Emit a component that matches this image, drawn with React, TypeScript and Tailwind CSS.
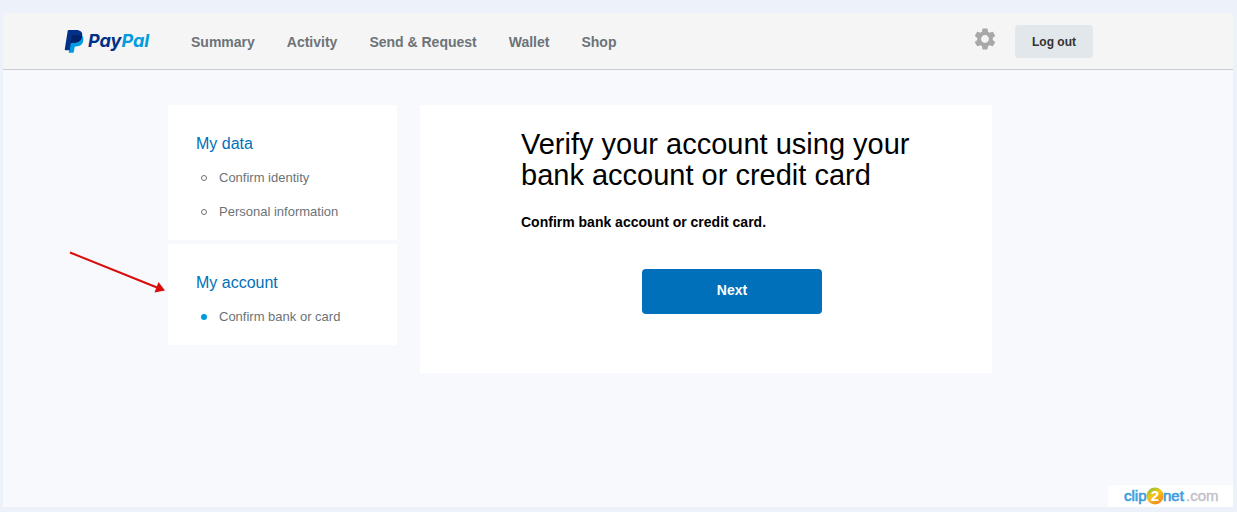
import { MdSettings } from "react-icons/md";

const navItems = ["Summary", "Activity", "Send & Request", "Wallet", "Shop"];

const sections = [
  {
    title: "My data",
    items: [
      { label: "Confirm identity", active: false },
      { label: "Personal information", active: false },
    ],
  },
  {
    title: "My account",
    items: [{ label: "Confirm bank or card", active: true }],
  },
];

const Logo = () => (
  <a href="#" aria-label="PayPal" className="flex items-center">
    <svg width="88" height="36" viewBox="0 -5 88 36" className="overflow-visible">
      <g transform="translate(-1 2) scale(0.95)">
        <path
          fill="#009cde"
          d="M21.222 6.917a3.35 3.35 0 0 0-.607-.541L9 5 6.3 21.8l-.24 1.55a.56.56 0 0 0 .554.65h3.882c.46 0 .85-.334.922-.788.06-.26.76-4.852.816-5.09a.932.932 0 0 1 .923-.788h.58c3.76 0 6.705-1.528 7.565-5.946.36-1.847.174-3.388-.777-4.471z"
        />
        <path
          fill="#003087"
          d="M7.076 21.337H2.47a.641.641 0 0 1-.633-.74L4.944.901C5.026.382 5.474 0 5.998 0h7.46c2.57 0 4.578.543 5.69 1.81 1.01 1.15 1.304 2.42 1.012 4.287-.023.143-.047.288-.077.437-.983 5.05-4.349 6.797-8.647 6.797h-2.19c-.524 0-.968.382-1.05.9z"
        />
        <path
          fill="#012169"
          d="M9.2 6.5c.1-.6.5-.9 1-.9h6.2c1.600 0 2.900.2 3.800.6-.023.143-.087.188-.117.337-.983 5.050-4.349 6.797-8.647 6.797h-2.190c-.4 0-.8.200-1 .6z"
        />
      </g>
      <text
        x="24"
        y="19"
        fontSize="18"
        className="font-['Inter',sans-serif] font-bold italic"
      >
        <tspan fill="#003087">Pay</tspan>
        <tspan fill="#009cde">Pal</tspan>
      </text>
    </svg>
  </a>
);

const Header = () => (
  <header className="flex items-center justify-between border-b border-[#c9cdd0] bg-[#f5f5f5] pl-[61px] pr-[140px] h-[57px]">
    <div className="flex items-center gap-[39px]">
      <Logo />
      <nav className="flex items-center gap-8 pt-[2px]">
        {navItems.map((item) => (
          <a
            key={item}
            href="#"
            className="whitespace-nowrap text-sm font-bold text-[#6c7378]"
          >
            {item}
          </a>
        ))}
      </nav>
    </div>
    <div className="flex items-center gap-[17px]">
      <button type="button" aria-label="Settings" className="pb-1 text-[#a8a8a8]">
        <MdSettings size={26} />
      </button>
      <button
        type="button"
        className="h-[33px] w-[78px] rounded bg-[#e1e7eb] pt-[2px] text-xs font-bold text-[#333333]"
      >
        Log out
      </button>
    </div>
  </header>
);

const Sidebar = () => (
  <aside className="flex w-[229px] shrink-0 flex-col gap-1">
    {sections.map((section) => (
      <section key={section.title} className="bg-white px-7 pt-[29px] pb-[11px]">
        <h2 className="text-base leading-5 text-[#0070ba]">{section.title}</h2>
        <ul className="mt-[7px]">
          {section.items.map((item) => (
            <li
              key={item.label}
              className="flex h-[34px] items-center gap-3 pl-[5px] text-[13px] text-[#6c7378]"
            >
              <span
                className={
                  item.active
                    ? "h-[6px] w-[6px] rounded-full bg-[#009cde]"
                    : "h-[6px] w-[6px] rounded-full border border-[#6c7378]"
                }
              />
              <a href="#">{item.label}</a>
            </li>
          ))}
        </ul>
      </section>
    ))}
  </aside>
);

const VerifyPanel = () => (
  <section className="flex-1 bg-white pt-6 pr-[49px] pb-[59px] pl-[101px]">
    <h1 className="text-[29px] leading-[31px] text-black">
      Verify your account using your bank account or credit card
    </h1>
    <p className="mt-[21px] text-sm font-bold text-black">
      Confirm bank account or credit card.
    </p>
    <button
      type="button"
      className="mx-auto mt-[37px] block h-[45px] w-[180px] rounded bg-[#0070ba] pb-1 text-sm font-bold text-white"
    >
      Next
    </button>
  </section>
);

const Arrow = () => (
  <svg
    className="absolute top-[250px] left-[68px]"
    width="100"
    height="46"
    viewBox="0 0 100 46"
    aria-hidden="true"
  >
    <path d="M2 2.500 L89 37.500" stroke="#d90b0b" strokeWidth="2" />
    <path d="M97 40.500 L90.500 32 L86.500 42.500 Z" fill="#d90b0b" />
  </svg>
);

const Watermark = () => (
  <div className="absolute right-1 bottom-[5px] flex h-[22px] w-[125px] items-center rounded-tl bg-white pl-4">
    <svg width="96" height="20" viewBox="0 0 96 20">
      <defs>
        <linearGradient id="badge" x1="0" y1="0" x2="0.6" y2="1">
          <stop offset="0" stopColor="#6fbf3a" />
          <stop offset="0.5" stopColor="#f5c518" />
          <stop offset="1" stopColor="#f58a1c" />
        </linearGradient>
      </defs>
      <g fontSize="15" className="font-['Liberation_Sans',sans-serif]">
        <text x="0" y="15" fill="#3f9fdc" stroke="#3f9fdc" strokeWidth="0.700">
          clip
        </text>
        <text x="39" y="15" fill="#3f9fdc" stroke="#3f9fdc" strokeWidth="0.700">
          net
        </text>
        <text x="62" y="15" fill="#bfc1c8" stroke="#bfc1c8" strokeWidth="0.400">
          .com
        </text>
        <circle cx="31" cy="10" r="8.500" fill="url(#badge)" />
        <text x="31" y="15" fill="#ffffff" fontWeight="bold" textAnchor="middle">
          2
        </text>
      </g>
    </svg>
  </div>
);

export default function App() {
  return (
    <div className="relative flex min-h-screen flex-col bg-[#edf1fa] pt-[13px] pr-1 pb-[5px] pl-[3px] font-['Liberation_Sans',Arial,sans-serif]">
      <div className="flex-1 bg-[#f7f9fc]">
        <Header />
        <main className="flex items-start gap-[23px] pt-[35px] pr-[241px] pl-[165px]">
          <Sidebar />
          <VerifyPanel />
        </main>
      </div>
      <Arrow />
      <Watermark />
    </div>
  );
}
